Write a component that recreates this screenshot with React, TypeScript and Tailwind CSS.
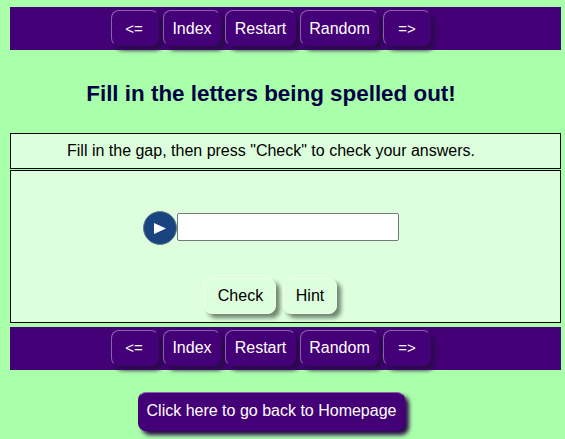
import React from 'react';

const navItems = [
  { label: '<=', cls: 'w-[48px] text-[15px] pr-[2px]' },
  { label: 'Index', cls: 'w-[58px] text-base' },
  { label: 'Restart', cls: 'w-[71px] text-base' },
  { label: 'Random', cls: 'w-[79px] text-base' },
  { label: '=>', cls: 'w-[48px] text-[15px]' },
];

const NavBar = ({ top = false }: { top?: boolean }) => (
  <div className="h-[43px] bg-[#440077] flex items-start gap-[4px] pl-[101px] pt-[3px]">
    {navItems.map((item) => (
      <button
        key={item.label}
        className={`h-[36px] rounded-[8px] bg-[#440077] text-white border border-[#440077] border-t-[#8a63ab] border-l-[#8a63ab] shadow-[4px_4px_4px_#2a0a4a] ${top ? 'pt-[2px]' : ''} ${item.cls}`}
      >
        {item.label}
      </button>
    ))}
  </div>
);

const App = () => {
  return (
    <div className="min-h-[439px] bg-[#aaffaa] pl-[10px] pr-[4px] pt-[7px] font-['Liberation_Sans',Arial,sans-serif] text-base overflow-hidden">
      <NavBar top />

      <h1 className="h-[83px] flex items-center justify-center pr-[29px] pt-[5px] text-[22.4px] font-bold text-[#000044]">
        Fill in the letters being spelled out!
      </h1>

      <div className="h-[36px] border border-black bg-[#ddffdd] flex items-center pl-[56px] text-black">
        Fill in the gap, then press "Check" to check your answers.
      </div>

      <div className="mt-px h-[153px] border border-black bg-[#ddffdd]">
        <div className="flex items-start pl-[132px] pt-[40px]">
          <div className="w-[34px] h-[34px] rounded-full bg-[#1a4480] border border-[#5f7f8f] flex items-center justify-center">
            <svg width="12" height="11" viewBox="0 0 12 11">
              <path d="M0 0 L12 5.5 L0 11 Z" fill="#ffffff" />
            </svg>
          </div>
          <input
            type="text"
            className="mt-[2px] w-[222px] h-[28px] bg-white border border-[#767676] rounded-[2px]"
          />
        </div>

        <div className="flex gap-[7px] pl-[193px] pt-[33px]">
          <button className="w-[72px] h-[36px] pl-px rounded-[8px] bg-[#ddffdd] text-black border border-[#eeffee] shadow-[4px_4px_4px_#6f866f]">
            Check
          </button>
          <button className="w-[54px] h-[36px] rounded-[8px] bg-[#ddffdd] text-black border border-[#eeffee] shadow-[4px_4px_4px_#6f866f]">
            Hint
          </button>
        </div>
      </div>

      <div className="mt-[4px]">
        <NavBar />
      </div>

      <div className="pl-[128px] pt-[22px]">
        <button className="w-[267px] h-[39px] pb-[2px] rounded-[8px] bg-[#440077] text-white border border-[#440077] border-t-[#8a63ab] shadow-[4px_4px_4px_#2a0a4a]">
          Click here to go back to Homepage
        </button>
      </div>
    </div>
  );
};

export default App;
